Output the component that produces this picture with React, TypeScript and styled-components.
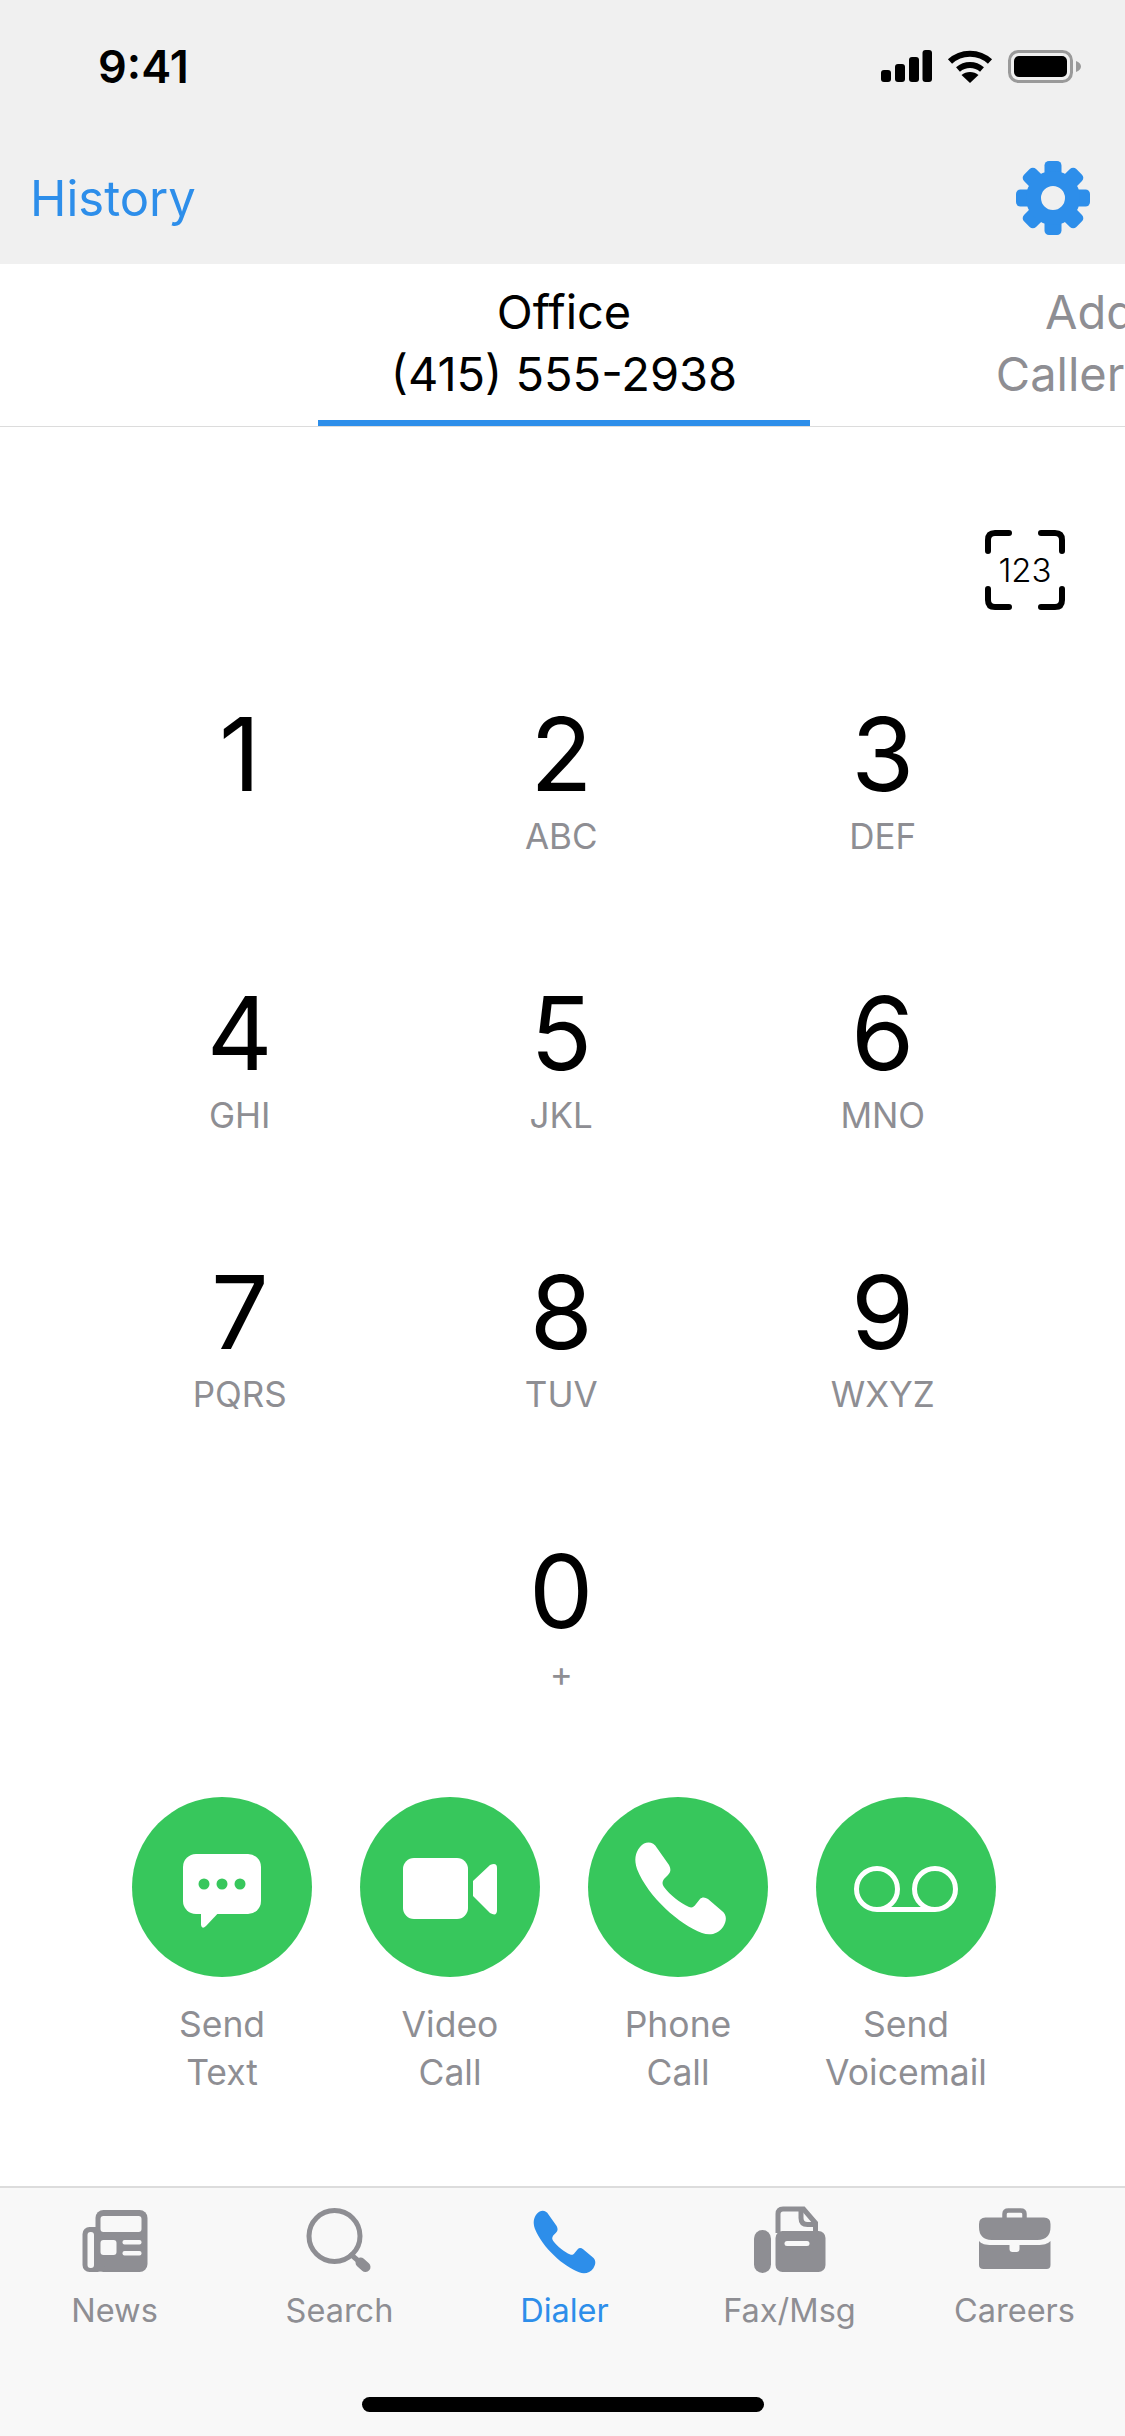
import styled, { createGlobalStyle } from "styled-components";

const BLUE = "#2d8eea";
const GRAY = "#8e8e93";
const GREEN = "#37c75c";
const BAR_BG = "#f8f8f8";

const GlobalStyle = createGlobalStyle`
  html, body {
    margin: 0;
    padding: 0;
    background: #fff;
    font-family: Inter, "Liberation Sans", sans-serif;
  }
`;

const Page = styled.div`
  width: 1125px;
  height: 2436px;
  display: flex;
  flex-direction: column;
  overflow: hidden;
  background: #fff;
`;

const Header = styled.header`
  background: #f0f0f0;
  height: 264px;
`;

const StatusBar = styled.div`
  height: 132px;
  padding: 0 44px 0 98px;
  box-sizing: border-box;
  display: flex;
  align-items: center;
  justify-content: space-between;
`;

const Time = styled.span`
  font-size: 45px;
  font-weight: 600;
  letter-spacing: 0;
  color: #000;
`;

const StatusIcons = styled.div`
  display: flex;
  align-items: center;
  gap: 15px;
`;

const NavBar = styled.nav`
  height: 132px;
  padding: 0 35px 0 30px;
  box-sizing: border-box;
  display: flex;
  align-items: center;
  justify-content: space-between;
`;

const HistoryLink = styled.a`
  font-size: 49px;
  color: ${BLUE};
`;

const Tabs = styled.div`
  height: 163px;
  box-sizing: border-box;
  padding-left: 318px;
  display: flex;
  overflow: hidden;
  border-bottom: 1px solid #dcdcdc;
`;

const LineTab = styled.div<{ $active?: boolean; $width: number }>`
  flex: 0 0 ${(p) => p.$width}px;
  height: 162px;
  box-sizing: border-box;
  padding-top: 17px;
  text-align: center;
  font-size: 47px;
  line-height: 62px;
  white-space: nowrap;
  color: ${(p) => (p.$active ? "#000" : GRAY)};
  border-bottom: 6px solid ${(p) => (p.$active ? BLUE : "transparent")};
`;

const ScanRow = styled.div`
  padding: 103px 60px 0 0;
  display: flex;
  justify-content: flex-end;
`;

const ScanButton = styled.div`
  position: relative;
  width: 80px;
  height: 80px;
  display: flex;
  align-items: center;
  justify-content: center;
`;

const ScanFrame = styled.svg`
  position: absolute;
  inset: 0;
`;

const ScanText = styled.span`
  font-size: 33px;
  font-weight: 300;
  color: #000;
`;

const Keypad = styled.div`
  margin-top: 89px;
  padding-left: 79px;
  display: grid;
  grid-template-columns: repeat(3, 321.5px);
  row-gap: 120px;
`;

const Key = styled.div<{ $column?: number }>`
  grid-column: ${(p) => p.$column ?? "auto"};
  height: 159px;
  display: flex;
  flex-direction: column;
  align-items: center;
`;

const Digit = styled.span`
  font-size: 102px;
  font-weight: 400;
  line-height: 110px;
  color: #000;
`;

const Letters = styled.span`
  margin-top: 5px;
  font-size: 35px;
  line-height: 44px;
  color: ${GRAY};
`;

const Actions = styled.div`
  margin-top: 102px;
  padding-left: 132px;
  display: flex;
  gap: 48px;
`;

const Action = styled.div`
  width: 180px;
  display: flex;
  flex-direction: column;
  align-items: center;
`;

const ActionCircle = styled.svg`
  display: block;
  border-radius: 50%;
  background: ${GREEN};
`;

const ActionLabel = styled.div`
  margin-top: 24px;
  width: 240px;
  text-align: center;
  font-size: 35.5px;
  line-height: 48px;
  color: ${GRAY};
`;

const TabBar = styled.footer`
  margin-top: auto;
  height: 250px;
  box-sizing: border-box;
  padding-top: 18px;
  display: flex;
  flex-direction: column;
  background: ${BAR_BG};
  border-top: 2px solid #dcdcdc;
`;

const TabItems = styled.div`
  display: grid;
  grid-template-columns: repeat(5, 1fr);
`;

const TabItem = styled.div`
  display: flex;
  flex-direction: column;
  align-items: center;
`;

const TabLabel = styled.span<{ $active?: boolean }>`
  margin-top: 15px;
  padding-left: 4px;
  font-size: 32.5px;
  line-height: 40px;
  color: ${(p) => (p.$active ? BLUE : GRAY)};
`;

const HomeIndicator = styled.div`
  margin: auto auto 24px;
  width: 402px;
  height: 15px;
  border-radius: 8px;
  background: #000;
`;

const PHONE_PATH =
  "M52 50C57 44 65 44 69 51L81 68C83 72 83 75 80 78L76 82C74 85 74 87 76 90C82 98 92 106 101 110C104 111 106 110 108 107L112 102C114 100 117 100 120 102L134 114C139 118 139 124 135 130C130 137 122 139 114 136C92 128 60 100 49 72C46 63 47 56 52 50Z";

function SignalIcon() {
  return (
    <svg width="51" height="32" viewBox="0 0 51 32" fill="#000">
      <rect x="0" y="20" width="10" height="12" rx="3" />
      <rect x="14" y="14" width="10" height="18" rx="3" />
      <rect x="28" y="7" width="10" height="25" rx="3" />
      <rect x="41.500" y="0" width="9.500" height="32" rx="3" />
    </svg>
  );
}

function WifiIcon() {
  return (
    <svg width="46" height="33" viewBox="0 0 46 33" fill="none" stroke="#000">
      <path d="M3 11.500C14 1 32 1 43 11.500" strokeWidth="6" />
      <path d="M11 19.500C18 13.500 28 13.500 35 19.500" strokeWidth="6" />
      <path d="M23 33L14.500 25C19 21 27 21 31.500 25Z" fill="#000" stroke="none" />
    </svg>
  );
}

function BatteryIcon() {
  return (
    <svg width="73" height="33" viewBox="0 0 73 33">
      <rect x="1.500" y="1.500" width="62" height="30" rx="9" fill="none" stroke="#9a9a9a" strokeWidth="3" />
      <rect x="6" y="6" width="53" height="21" rx="5" fill="#000" />
      <path d="M68 11C71 12 73 14 73 16.500C73 19 71 21 68 22Z" fill="#9a9a9a" />
    </svg>
  );
}

function GearIcon() {
  return (
    <svg width="74" height="74" viewBox="-37 -37 74 74" fill={BLUE}>
      {[0, 45, 90, 135, 180, 225, 270, 315].map((angle) => (
        <rect key={angle} x="-8.500" y="-37" width="17" height="18" rx="4.500" transform={`rotate(${angle})`} />
      ))}
      <circle r="19.500" fill="none" stroke={BLUE} strokeWidth="15" />
    </svg>
  );
}

function ScanIcon() {
  return (
    <ScanButton>
      <ScanFrame width="80" height="80" viewBox="0 0 80 80" fill="none" stroke="#000" strokeWidth="6" strokeLinecap="round">
        <path d="M3 21V10Q3 3 10 3H24" />
        <path d="M56 3H70Q77 3 77 10V21" />
        <path d="M3 59V70Q3 77 10 77H24" />
        <path d="M56 77H70Q77 77 77 70V59" />
      </ScanFrame>
      <ScanText>123</ScanText>
    </ScanButton>
  );
}

function ChatGlyph() {
  return (
    <>
      <rect x="51" y="57" width="78" height="60" rx="13" fill="#fff" />
      <path d="M69 112V128Q70 133 74 129L90 112Z" fill="#fff" />
      <circle cx="72" cy="87" r="5.500" fill={GREEN} />
      <circle cx="90" cy="87" r="5.500" fill={GREEN} />
      <circle cx="108" cy="87" r="5.500" fill={GREEN} />
    </>
  );
}

function VideoGlyph() {
  return (
    <>
      <rect x="43" y="61" width="65" height="61" rx="11" fill="#fff" />
      <path d="M113 84V99L130 116Q137 120 137 113V71Q137 65 130 68Z" fill="#fff" />
    </>
  );
}

function VoicemailGlyph() {
  return (
    <g fill="none" stroke="#fff" strokeWidth="5">
      <circle cx="61" cy="92" r="20.500" />
      <circle cx="119" cy="92" r="20.500" />
      <path d="M61 112.500H119" />
    </g>
  );
}

function NewsIcon() {
  return (
    <svg width="78" height="70" viewBox="-7.500 -3 78 70" fill={GRAY}>
      <rect x="14" y="1" width="52" height="62" rx="8" />
      <rect x="1" y="18" width="22" height="45" rx="7" />
      <rect x="6" y="23" width="6.500" height="36" rx="3" fill={BAR_BG} />
      <rect x="19" y="7" width="41" height="16" rx="3" fill={BAR_BG} />
      <rect x="19" y="31" width="16" height="15" rx="3" fill={BAR_BG} />
      <rect x="41" y="31" width="19" height="4.500" rx="2" fill={BAR_BG} />
      <rect x="41" y="42" width="19" height="4.500" rx="2" fill={BAR_BG} />
    </svg>
  );
}

function SearchIcon() {
  return (
    <svg width="78" height="70" viewBox="-6.500 0 78 70" fill="none" stroke={GRAY} strokeLinecap="round">
      <circle cx="29" cy="30" r="25.500" strokeWidth="5" />
      <path d="M46 49L60 61" strokeWidth="5" />
      <path d="M55 56.500L60 61" strokeWidth="10" />
    </svg>
  );
}

function DialerIcon() {
  return (
    <svg width="78" height="70" viewBox="33 38.600 114.700 102.900" fill={BLUE}>
      <path d={PHONE_PATH} />
    </svg>
  );
}

function FaxIcon() {
  return (
    <svg width="78" height="70" viewBox="-1.500 1 78 70" fill={GRAY}>
      <rect x="3.500" y="25" width="17" height="43" rx="8.500" />
      <rect x="25" y="26" width="50" height="41" rx="7" />
      <rect x="34" y="36" width="25" height="5" rx="2.500" fill={BAR_BG} />
      <g fill="none" stroke={GRAY} strokeWidth="5">
        <path d="M27.500 28V9Q27.500 4 32.500 4H53L65 18V28" />
        <path d="M50.500 5V13Q50.500 19.500 57 19.500H66" />
      </g>
    </svg>
  );
}

function CareersIcon() {
  return (
    <svg width="78" height="70" viewBox="-1.500 1 78 70" fill={GRAY}>
      <path d="M29 13V9Q29 5.500 33 5.500H45Q49 5.500 49 9V13" fill="none" stroke={GRAY} strokeWidth="4.500" />
      <path d="M10 12.500H68.500Q75 12.500 75 19V22Q75 34.500 62 35H16Q3.500 34.500 3.500 22V19Q3.500 12.500 10 12.500Z" />
      <path d="M3.500 36C6 39 10 40 16 40H34V44Q34 47 37 47H41Q44 47 44 44V40H62C68 40 72 39 75 36V60Q75 64 71 64H8Q3.500 64 3.500 60Z" />
    </svg>
  );
}

const KEYS = [
  { digit: "1", letters: "" },
  { digit: "2", letters: "ABC" },
  { digit: "3", letters: "DEF" },
  { digit: "4", letters: "GHI" },
  { digit: "5", letters: "JKL" },
  { digit: "6", letters: "MNO" },
  { digit: "7", letters: "PQRS" },
  { digit: "8", letters: "TUV" },
  { digit: "9", letters: "WXYZ" },
  { digit: "0", letters: "+", column: 2 },
];

const ACTIONS = [
  { top: "Send", bottom: "Text", glyph: <ChatGlyph /> },
  { top: "Video", bottom: "Call", glyph: <VideoGlyph /> },
  { top: "Phone", bottom: "Call", glyph: <path d={PHONE_PATH} fill="#fff" /> },
  { top: "Send", bottom: "Voicemail", glyph: <VoicemailGlyph /> },
];

const TAB_ITEMS = [
  { label: "News", icon: <NewsIcon /> },
  { label: "Search", icon: <SearchIcon /> },
  { label: "Dialer", icon: <DialerIcon />, active: true },
  { label: "Fax/Msg", icon: <FaxIcon /> },
  { label: "Careers", icon: <CareersIcon /> },
];

function App() {
  return (
    <Page>
      <GlobalStyle />
      <Header>
        <StatusBar>
          <Time>9:41</Time>
          <StatusIcons>
            <SignalIcon />
            <WifiIcon />
            <BatteryIcon />
          </StatusIcons>
        </StatusBar>
        <NavBar>
          <HistoryLink>History</HistoryLink>
          <GearIcon />
        </NavBar>
      </Header>

      <Tabs>
        <LineTab $active $width={492}>
          Office
          <br />
          (415) 555-2938
        </LineTab>
        <LineTab $width={560}>
          Add
          <br />
          Caller ID
        </LineTab>
      </Tabs>

      <ScanRow>
        <ScanIcon />
      </ScanRow>

      <Keypad>
        {KEYS.map((k) => (
          <Key key={k.digit} $column={k.column}>
            <Digit>{k.digit}</Digit>
            <Letters>{k.letters}</Letters>
          </Key>
        ))}
      </Keypad>

      <Actions>
        {ACTIONS.map((a, idx) => (
          <Action key={idx}>
            <ActionCircle width="180" height="180" viewBox="0 0 180 180">
              {a.glyph}
            </ActionCircle>
            <ActionLabel>
              {a.top}
              <br />
              {a.bottom}
            </ActionLabel>
          </Action>
        ))}
      </Actions>

      <TabBar>
        <TabItems>
          {TAB_ITEMS.map((t) => (
            <TabItem key={t.label}>
              {t.icon}
              <TabLabel $active={t.active}>{t.label}</TabLabel>
            </TabItem>
          ))}
        </TabItems>
        <HomeIndicator />
      </TabBar>
    </Page>
  );
}

export default App;
